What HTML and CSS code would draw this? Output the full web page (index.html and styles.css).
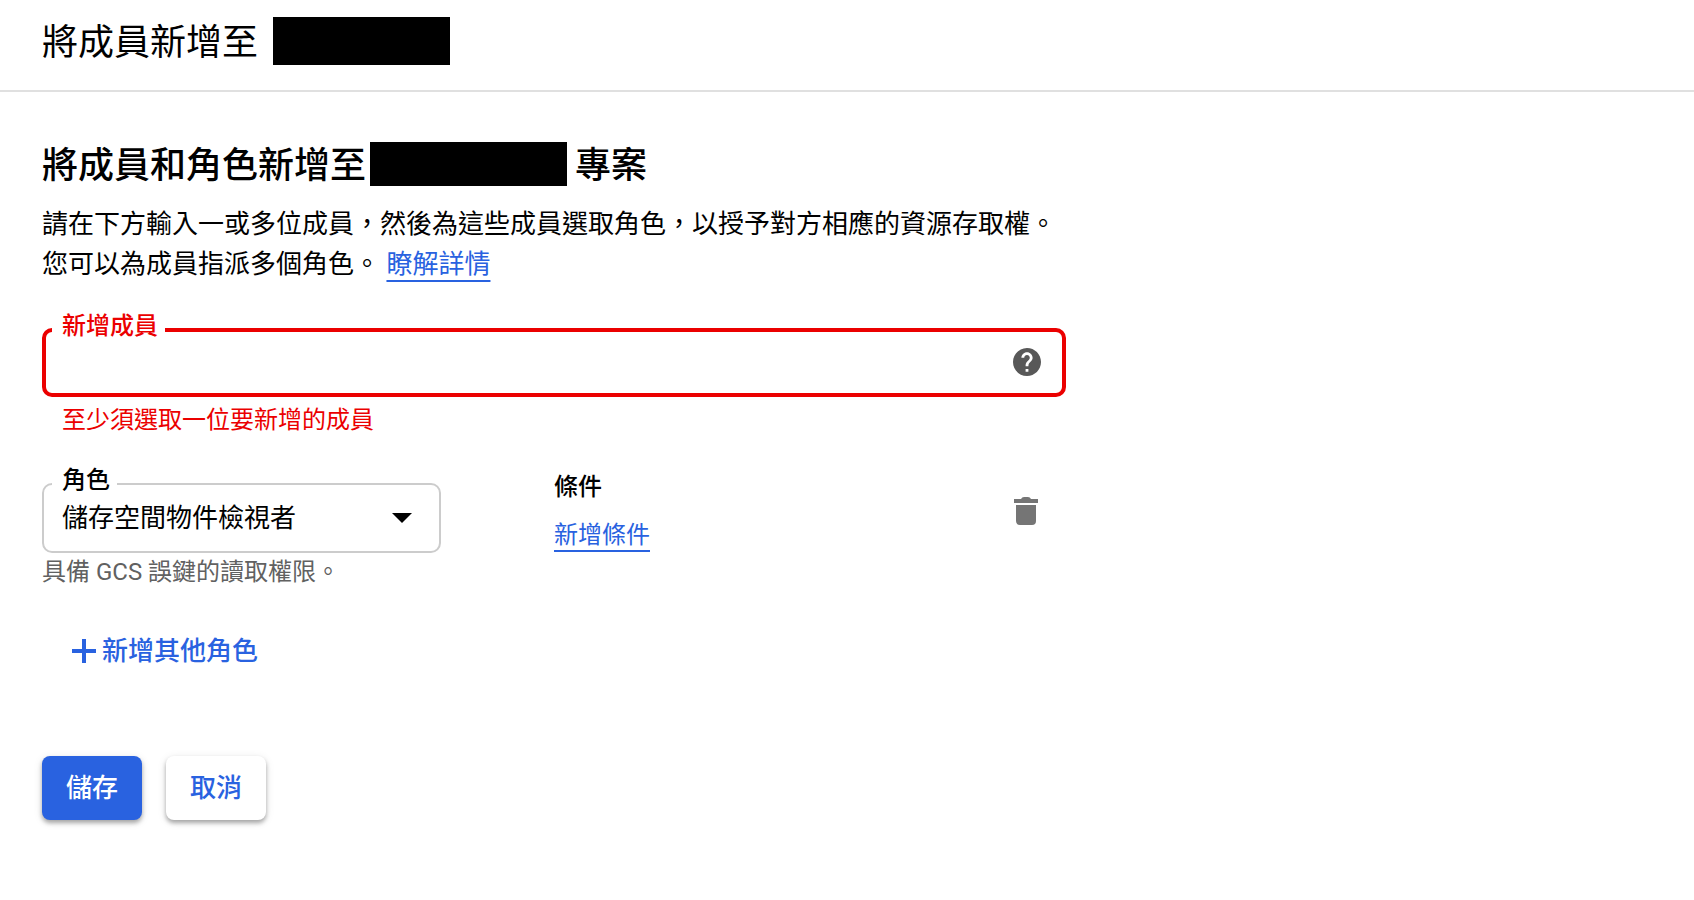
FILE: index.html
```html
<!DOCTYPE html>
<html lang="zh-Hant">
<head>
<meta charset="utf-8">
<meta name="viewport" content="width=device-width, initial-scale=1">
<title>將成員新增至專案</title>
<link rel="stylesheet" href="styles.css">
</head>
<body>
<header class="topbar">
  <h1 class="topbar-title">將成員新增至</h1>
  <span class="redacted redacted-top"></span>
</header>
<main class="panel">
  <h2 class="heading"><span class="heading-text">將成員和角色新增至</span><span class="redacted redacted-heading"></span><span class="heading-text">專案</span></h2>
  <p class="intro">請在下方輸入一或多位成員，然後為這些成員選取角色，以授予對方相應的資源存取權。您可以為成員指派多個角色。 <a class="link" href="#">瞭解詳情</a></p>
  <form class="form">
    <fieldset class="field field-error">
      <legend class="field-legend"><label for="members">新增成員</label></legend>
      <div class="field-row">
        <input class="field-input" id="members" type="text" aria-describedby="members-error">
        <button class="icon-button" type="button" aria-label="說明">
          <svg viewBox="2 2 20 20" width="28" height="28"><path fill="currentColor" d="M12 2C6.480 2 2 6.480 2 12s4.480 10 10 10 10-4.480 10-10S17.520 2 12 2zm1 17h-2v-2h2v2zm2.070-7.750l-.9.920C13.450 12.900 13 13.500 13 15h-2v-.5c0-1.100.450-2.100 1.170-2.830l1.240-1.260c.370-.360.590-.860.590-1.410 0-1.100-.9-2-2-2s-2 .9-2 2H8c0-2.210 1.790-4 4-4s4 1.790 4 4c0 .880-.360 1.680-.930 2.250z"/></svg>
        </button>
      </div>
    </fieldset>
    <p class="error" id="members-error">至少須選取一位要新增的成員</p>
    <div class="role-row">
      <div class="role">
        <fieldset class="field">
          <legend class="field-legend"><label for="role">角色</label></legend>
          <div class="field-row">
            <select class="field-select" id="role"><option>儲存空間物件檢視者</option></select>
            <svg class="arrow" viewBox="0 0 20 10" width="20" height="10" aria-hidden="true"><path fill="currentColor" d="M0 0h20L10 10z"/></svg>
          </div>
        </fieldset>
        <p class="hint">具備 GCS 誤鍵的讀取權限。</p>
      </div>
      <div class="condition">
        <h3 class="condition-title">條件</h3>
        <a class="link" href="#">新增條件</a>
      </div>
      <button class="icon-button trash" type="button" aria-label="刪除">
        <svg viewBox="0 0 24 28" width="24" height="28"><path fill="currentColor" d="M0 2h7Q8 0 10 0h4q2 0 3 2h7v4H0zM2 8h20v16a4 4 0 0 1-4 4H6a4 4 0 0 1-4-4z"/></svg>
      </button>
    </div>
    <button class="add-role" type="button">
      <svg viewBox="0 0 24 24" width="24" height="24" aria-hidden="true"><path fill="currentColor" d="M10 0h4v10h10v4H14v10h-4V14H0v-4h10z"/></svg>
      <span>新增其他角色</span>
    </button>
    <div class="actions">
      <button class="button button-primary" type="submit">儲存</button>
      <button class="button" type="button">取消</button>
    </div>
  </form>
</main>
</body>
</html>
```

FILE: styles.css
```css
* {
  box-sizing: border-box;
}

body {
  margin: 0;
  background: #fff;
  color: #000;
  font-family: Roboto, "Noto Sans CJK TC", sans-serif;
  font-size: 26px;
  line-height: 40px;
}

h1, h2, h3, p {
  margin: 0;
}

button, input, select {
  font: inherit;
  color: inherit;
}

.topbar {
  display: flex;
  align-items: center;
  gap: 15px;
  padding: 17px 42px 25px;
  border-bottom: 2px solid #e0e0e0;
}

.topbar-title {
  padding-top: 4px;
  font-size: 36px;
  line-height: 44px;
  font-weight: 400;
}

.redacted {
  background: #000;
}

.redacted-top {
  width: 177px;
  height: 48px;
}

.redacted-heading {
  width: 197px;
  height: 44px;
  margin: 0 8px 0 4px;
}

.panel {
  max-width: 1108px;
  padding: 50px 42px 40px;
}

.heading {
  display: flex;
  align-items: center;
  font-size: 36px;
  line-height: 40px;
  font-weight: 500;
}

.heading-text {
  padding-top: 4px;
}

.intro {
  margin-top: 18px;
}

.link {
  color: #2962e0;
  text-decoration: underline 2px;
  text-decoration-skip-ink: none;
  text-underline-offset: 7px;
}

.form {
  margin-top: 28px;
}

.field {
  min-width: 0;
  margin: 0;
  padding: 0 8px 17px;
  border: 2px solid #ccc;
  border-radius: 10px;
}

.field-error {
  padding: 0 6px 17px;
  border: 4px solid #eb0000;
}

.field-legend {
  padding: 0 7px 8px 10px;
  font-size: 24px;
  line-height: 28px;
  font-weight: 500;
}

.field-error .field-legend,
.error {
  color: #eb0000;
}

.field-row {
  display: flex;
  align-items: center;
  padding: 0 15px 0 10px;
}

.field-input,
.field-select {
  flex: 1;
  min-width: 0;
  padding: 0;
  border: 0;
  outline: 0;
  background: transparent;
}

.field-input {
  height: 28px;
}

.field-select {
  appearance: none;
  height: 32px;
  line-height: 32px;
  margin-right: -20px;
  padding-right: 20px;
}

.arrow {
  margin-right: 4px;
  pointer-events: none;
}

.icon-button {
  display: flex;
  padding: 0;
  border: 0;
  background: none;
  color: #585858;
}

.error {
  padding: 7px 20px 0;
  font-size: 24px;
  line-height: 32px;
}

.role-row {
  display: grid;
  grid-template-columns: 399px 1fr auto;
  column-gap: 113px;
  margin-top: 30px;
}

.hint {
  color: #616161;
  font-size: 24px;
  line-height: 38px;
}

.condition {
  padding-top: 5px;
  font-size: 24px;
}

.condition-title {
  margin-bottom: 12px;
  font-size: 24px;
  line-height: 32px;
  font-weight: 500;
}

.trash {
  align-self: start;
  margin: 31px 28px 0 0;
  color: #757575;
}

.add-role {
  display: flex;
  align-items: center;
  gap: 6px;
  margin: 40px 0 0 30px;
  padding: 0;
  border: 0;
  background: none;
  color: #2962e0;
  font-weight: 500;
}

.actions {
  display: flex;
  gap: 24px;
  margin-top: 85px;
}

.button {
  min-width: 100px;
  padding: 12px 24px;
  border: 0;
  border-radius: 8px;
  background: #fff;
  color: #2962e0;
  font-weight: 500;
  box-shadow: 0 3px 4px rgba(0, 0, 0, 0.3), 0 2px 10px rgba(0, 0, 0, 0.1);
}

.button-primary {
  background: #2962e0;
  color: #fff;
}
```
